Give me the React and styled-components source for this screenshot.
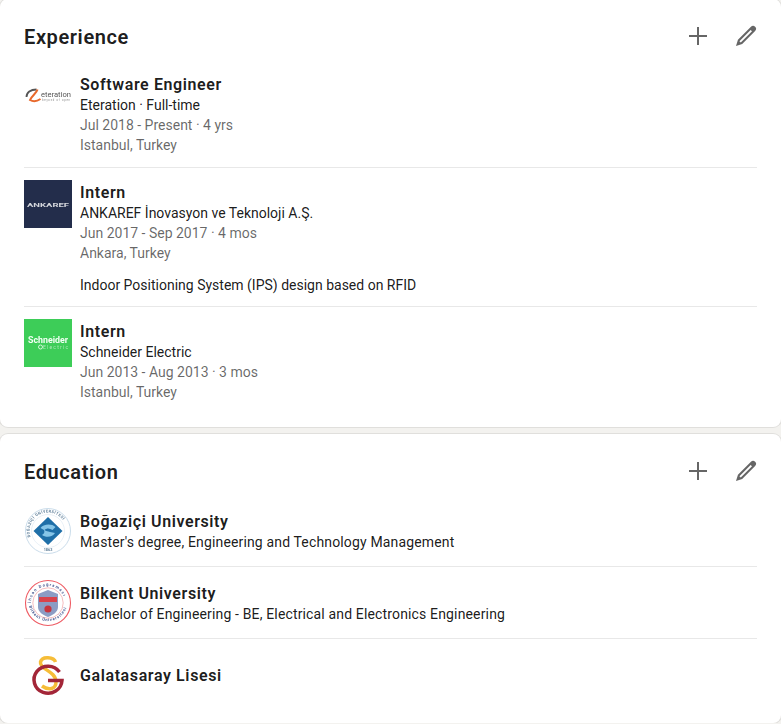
import styled, { createGlobalStyle } from "styled-components";

const GlobalStyle = createGlobalStyle`
  html, body {
    margin: 0;
    padding: 0;
    background: #f3f2ef;
  }
  body {
    font-family: Roboto, "Liberation Sans", sans-serif;
    font-size: 14px;
    color: rgba(0, 0, 0, 0.9);
  }
`;

const Page = styled.main`
  display: flex;
  flex-direction: column;
  gap: 7px;
  margin-top: -1px;
`;

const Card = styled.section`
  background: #fff;
  border-radius: 8px;
  box-shadow: 0 0 0 1px rgba(0, 0, 0, 0.08);
  padding-bottom: ${(p) => p.$bottom}px;
`;

const Header = styled.header`
  display: flex;
  align-items: center;
  justify-content: space-between;
  height: 24px;
  padding: 25px 23px 24px 24px;
`;

const Heading = styled.h2`
  margin: 0;
  padding-top: 2px;
  font-size: 20px;
  font-weight: 600;
  line-height: 24px;
  letter-spacing: 0.6px;
`;

const Actions = styled.div`
  display: flex;
  gap: 24px;
`;

const ActionIcon = styled.svg`
  display: block;
  width: 24px;
  height: 24px;
  fill: #666;
`;

const Row = styled.article`
  display: flex;
  align-items: flex-start;
  gap: 8px;
  margin: 0 24px;
  padding: 12px 0 ${(p) => p.$pad}px;
  border-bottom: ${(p) => (p.$last ? "none" : "1px solid #e8e8e8")};

  &:first-of-type {
    padding-top: 0;
  }
`;

const Logo = styled.svg`
  display: block;
  flex: none;
  width: 48px;
  height: 48px;
  filter: blur(0.3px);
`;

const Body = styled.div`
  align-self: center;
  min-width: 0;
  padding-bottom: ${(p) => (p.$compact ? "1px" : "0")};
`;

const Title = styled.div`
  padding-top: 2px;
  font-size: 16px;
  font-weight: 600;
  line-height: 21px;
  letter-spacing: 0.6px;
`;

const Line = styled.div`
  line-height: 20px;
  letter-spacing: ${(p) => (p.$wide ? "0.15px" : "0")};
  color: ${(p) => (p.$muted ? "rgba(0, 0, 0, 0.6)" : "rgba(0, 0, 0, 0.9)")};
`;

const Description = styled(Line)`
  margin-top: 12px;
`;

const AddIcon = () => (
  <ActionIcon viewBox="0 0 24 24">
    <path d="M21 13h-8v8h-2v-8H3v-2h8V3h2v8h8z" />
  </ActionIcon>
);

const EditIcon = () => (
  <ActionIcon viewBox="0 0 24 24">
    <path d="M21.13 2.86a3 3 0 00-4.17 0l-13 13L2 22l6.19-2L21.13 7a3 3 0 000-4.16zM6.77 18.57l-1.35-1.34L16.64 6 18 7.35z" />
  </ActionIcon>
);

const EterationLogo = () => (
  <Logo viewBox="0 0 48 48">
    <path d="M2.500 25c0-4.500 4-7.500 10-7.500" fill="none" stroke="#555" strokeWidth="1.800" />
    <path d="M13.500 17.500c-1 4-6 6.500-7.500 10.500 3.500 2 7.500 1 10.500-1" fill="none" stroke="#e8692c" strokeWidth="2" />
    <text x="17" y="24.500" fontFamily="Roboto, sans-serif" fontSize="7.500" textLength="30" lengthAdjust="spacingAndGlyphs" fill="#555">eteration</text>
    <text x="18" y="28.500" fontFamily="Roboto, sans-serif" fontSize="2.600" textLength="28" fill="#888">beyond of open</text>
  </Logo>
);

const AnkarefLogo = () => (
  <Logo viewBox="0 0 48 48">
    <rect width="48" height="48" fill="#232d4b" />
    <text x="3" y="26.500" fontFamily="Roboto, sans-serif" fontWeight="700" fontSize="6" textLength="42" lengthAdjust="spacingAndGlyphs" fill="#d5d7dd">ANKAREF</text>
  </Logo>
);

const SchneiderLogo = () => (
  <Logo viewBox="0 0 48 48">
    <rect width="48" height="48" fill="#3dcd58" />
    <text x="4" y="24" fontFamily="Roboto, sans-serif" fontWeight="700" fontSize="8.400" textLength="40" lengthAdjust="spacingAndGlyphs" fill="#f2fff4">Schneider</text>
    <text x="19" y="29.800" fontFamily="Roboto, sans-serif" fontSize="5" textLength="25" fill="#a8e8b5">Electric</text>
    <circle cx="16.500" cy="28" r="2" fill="none" stroke="#f2fff4" strokeWidth="0.800" />
  </Logo>
);

const BogaziciLogo = () => (
  <Logo viewBox="0 0 48 48">
    <defs>
      <path id="bogaziciArc" d="M6.500 30A18.500 18.500 0 1 1 41.500 30" />
    </defs>
    <circle cx="24" cy="24" r="22.500" fill="#fff" stroke="#bcd3e4" strokeWidth="0.800" />
    <circle cx="24" cy="24" r="16.500" fill="none" stroke="#d5e3ee" strokeWidth="0.500" />
    <text fontFamily="Roboto, sans-serif" fontSize="3.800" fontWeight="700" fill="#5f7f99">
      <textPath href="#bogaziciArc" textLength="52">BOĞAZİÇİ ÜNİVERSİTESİ</textPath>
    </text>
    <text x="24" y="44" textAnchor="middle" fontFamily="Roboto, sans-serif" fontSize="3.800" fontWeight="700" fill="#5f7f99">1863</text>
    <path d="M24 10 38.500 24 24 38 9.500 24z" fill="#1f6fa8" />
    <path d="M16.500 21c2.500-4 11-5 15-1l-3 3c-3-2-6-2-8 0 3 2 8 2 10.500 3-2 4-9 5-13 2 2-1 3-3 2-5z" fill="#86c5e8" />
  </Logo>
);

const BilkentLogo = () => (
  <Logo viewBox="0 0 48 48">
    <defs>
      <path id="bilkentTop" d="M7 24A17 17 0 0 1 41 24" />
      <path id="bilkentBottom" d="M5 27A19.500 19.500 0 0 0 43 27" />
    </defs>
    <circle cx="24" cy="24" r="22.500" fill="#fff" stroke="#ee5a62" strokeWidth="1.100" />
    <circle cx="24" cy="24" r="15.200" fill="none" stroke="#f2a0a4" strokeWidth="0.700" />
    <text fontFamily="Roboto, sans-serif" fontSize="4" fontWeight="700" fill="#46558f">
      <textPath href="#bilkentTop" textLength="46">İhsan Doğramacı</textPath>
    </text>
    <text fontFamily="Roboto, sans-serif" fontSize="4" fontWeight="700" fill="#46558f">
      <textPath href="#bilkentBottom" textLength="50">Bilkent Üniversitesi</textPath>
    </text>
    <path d="M14 15 24 11 34 15v13c0 5-5 8-10 10-5-2-10-5-10-10z" fill="#8c9cc4" />
    <rect x="15" y="18" width="18" height="5" fill="#d9434c" />
    <circle cx="24" cy="30" r="3.600" fill="#c9343e" />
  </Logo>
);

const GalatasarayLogo = () => (
  <Logo viewBox="0 0 48 48">
    <path d="M31.500 11C30 6 18 4.500 16.500 11 15 18 32 20 32 31 32 38 25 40 18 35" fill="none" stroke="#f6bd38" strokeWidth="3.500" />
    <path d="M35.500 21A14 13.500 0 1 0 38 29.500H24" fill="none" stroke="#a32638" strokeWidth="3.500" />
  </Logo>
);

const experience = [
  {
    logo: <EterationLogo />,
    title: "Software Engineer",
    org: "Eteration · Full-time",
    dates: "Jul 2018 - Present · 4 yrs",
    place: "Istanbul, Turkey",
    pad: 12,
  },
  {
    logo: <AnkarefLogo />,
    title: "Intern",
    org: "ANKAREF İnovasyon ve Teknoloji A.Ş.",
    dates: "Jun 2017 - Sep 2017 · 4 mos",
    place: "Ankara, Turkey",
    description: "Indoor Positioning System (IPS) design based on RFID",
  },
  {
    logo: <SchneiderLogo />,
    title: "Intern",
    org: "Schneider Electric",
    dates: "Jun 2013 - Aug 2013 · 3 mos",
    place: "Istanbul, Turkey",
  },
];

const education = [
  {
    logo: <BogaziciLogo />,
    title: "Boğaziçi University",
    org: "Master's degree, Engineering and Technology Management",
    wide: true,
  },
  {
    logo: <BilkentLogo />,
    title: "Bilkent University",
    org: "Bachelor of Engineering - BE, Electrical and Electronics Engineering",
    wide: true,
  },
  { logo: <GalatasarayLogo />, title: "Galatasaray Lisesi" },
];

const Section = ({ label, items, bottom, compact }) => (
  <Card $bottom={bottom}>
    <Header>
      <Heading>{label}</Heading>
      <Actions>
        <AddIcon />
        <EditIcon />
      </Actions>
    </Header>
    {items.map((item, i) => (
      <Row key={item.title + i} $last={i === items.length - 1} $pad={item.pad || 11}>
        {item.logo}
        <Body $compact={compact}>
          <Title>{item.title}</Title>
          {item.org && <Line $wide={item.wide}>{item.org}</Line>}
          {item.dates && <Line $muted>{item.dates}</Line>}
          {item.place && <Line $muted>{item.place}</Line>}
          {item.description && <Description>{item.description}</Description>}
        </Body>
      </Row>
    ))}
  </Card>
);

export default function App() {
  return (
    <>
      <GlobalStyle />
      <Page>
        <Section label="Experience" items={experience} bottom={14} />
        <Section label="Education" items={education} bottom={13} compact />
      </Page>
    </>
  );
}
